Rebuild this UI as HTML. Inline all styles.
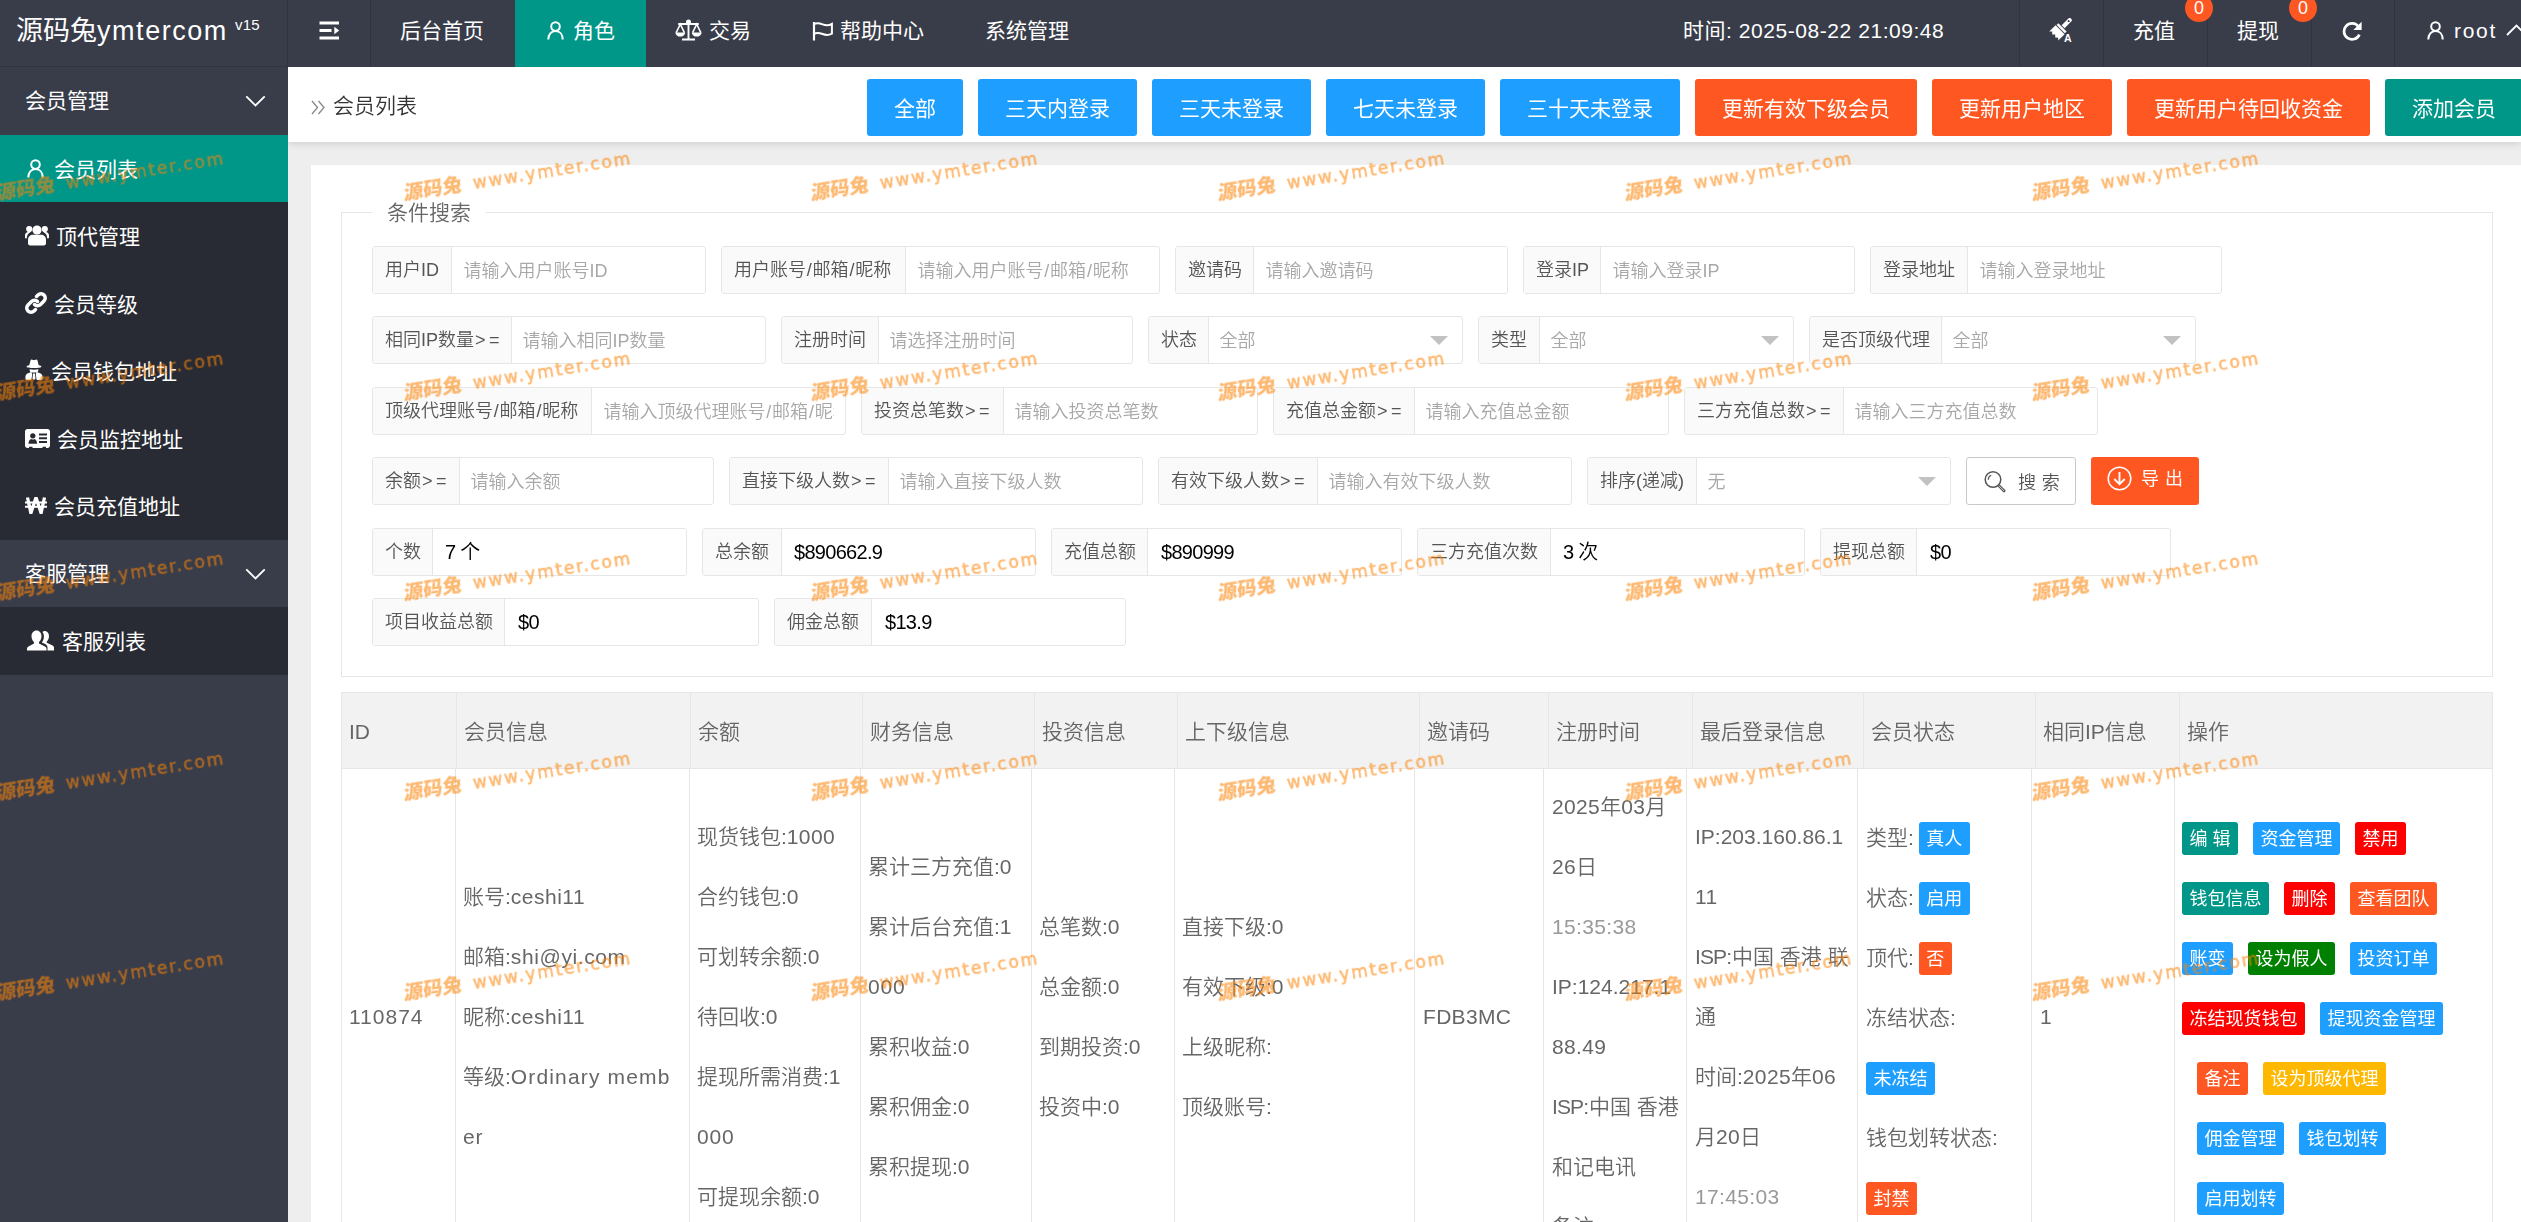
<!DOCTYPE html>
<html lang="zh-CN">
<head>
<meta charset="utf-8">
<title>会员列表</title>
<style>
*{box-sizing:border-box;margin:0;padding:0}
html,body{width:2521px;height:1222px;overflow:hidden;background:#eee}
body{font-family:"Liberation Sans","Noto Sans CJK SC",sans-serif;font-size:21px;color:#333;position:relative;line-height:1}
svg{display:block}
.abs{position:absolute}
/* ---------- header ---------- */
#hdr{position:absolute;left:0;top:0;width:2521px;height:67px;background:#393D49;color:#fff;z-index:5}
#hdr .sep{position:absolute;top:0;width:1px;height:67px;background:#30343f}
#hdr .t{position:absolute;top:0;height:66px;line-height:62px;white-space:nowrap;font-size:21px}
#logo{left:16px;font-size:27px !important;line-height:62px !important}
#logo b{font-weight:normal;letter-spacing:1.55px}
#logo sup{font-size:15px;position:relative;top:-10.5px;left:7px;vertical-align:baseline;letter-spacing:.3px}
#act{position:absolute;left:515px;top:0;width:131px;height:67px;background:#009688}
.badge{position:absolute;top:-6px;width:28px;height:28px;border-radius:14px;background:#FF5722;color:#fff;font-size:18px;line-height:29px;text-align:center}
/* ---------- sidebar ---------- */
#side{position:absolute;left:0;top:65.75px;width:288px;height:1156px;background:#393D49;color:#fff;z-index:4}
#side .it{position:absolute;left:0;width:288px;height:67.5px;line-height:68.5px;font-size:21px;white-space:nowrap}
#side .ch{background:#282B33;line-height:69px !important}
#side .on{background:#009688}
#side .it span{position:absolute;top:0}
#side .it svg{position:absolute}
/* ---------- crumb ---------- */
#crumb{will-change:transform;position:absolute;left:288px;top:67px;width:2233px;height:75px;background:#fff;box-shadow:0 2px 7px rgba(0,0,0,.13);z-index:3}
#crumb .bt{position:absolute;top:12px;height:57px;line-height:60px;border-radius:3px;color:#fff;font-size:21px;text-align:center;white-space:nowrap}
.blue{background:#1E9FFF}.org{background:#FF5722}.grn{background:#009688}.red{background:#FF0000}.dg{background:#008000}.yel{background:#FFB800}
#card{position:absolute;left:311px;top:165px;width:2300px;height:1100px;background:#fff;z-index:1}
#lay{will-change:transform;font-weight:350;position:absolute;left:0;top:0;width:2521px;height:1222px;z-index:2;overflow:hidden}
#fs{position:absolute;left:341px;top:212px;width:2152px;height:465px;border:1px solid #e6e6e6}
#lg{position:absolute;left:372px;top:196px;width:114px;height:34px;background:#fff;line-height:34px;text-align:center;font-size:21px;color:#666}
.fi{position:absolute;height:48px;border:1px solid #e6e6e6;border-radius:3px;background:#fff;font-size:18px;line-height:47.5px;white-space:nowrap;overflow:hidden}
.fi label{position:absolute;left:0;top:0;height:46px;background:#FAFAFA;border-right:1px solid #e6e6e6;padding-left:12px;color:#555}
.fi i,.fi u{font-style:normal;text-decoration:none;position:absolute;top:1px;height:45px;margin-left:-1.500px;right:11px;overflow:hidden;color:#a8a8a8}
.fi u{color:#000;font-size:20px;letter-spacing:-.7px;top:0;margin-left:0}
.fi s{position:absolute;right:14px;top:19px;width:0;height:0;border:9px solid transparent;border-top-color:#c2c2c2;border-bottom-width:0}
.sbtn,.ebtn{position:absolute;height:48px;border-radius:3px;font-size:18px;line-height:48px;white-space:nowrap}
.sbtn{border:1px solid #c9c9c9;background:#fff;color:#555}
.ebtn{background:#FF5722;color:#fff;font-weight:400}
#th{position:absolute;left:341px;top:692px;width:2152px;height:77px;background:#f2f2f2;border:1px solid #e6e6e6}
#tbl{position:absolute;left:341px;top:768px;width:2152px;height:500px;border:1px solid #e6e6e6;border-top:0}
.hb{position:absolute;top:693px;width:1px;height:75px;background:#e6e6e6}
.bb{position:absolute;top:769px;width:1px;height:460px;background:#e6e6e6}
.hc{position:absolute;top:702px;height:60px;line-height:60px;font-size:21px;color:#666;white-space:nowrap}
.bc{position:absolute;line-height:60px;font-size:21px;color:#666;white-space:nowrap}
.bc em{font-style:normal;color:#999}
.xs{display:inline-block;vertical-align:middle;height:33px;line-height:35px;padding:0 7.5px;font-size:18px;font-weight:normal;color:#fff;border-radius:3px;position:relative;top:-1px}
.ml{margin-left:15px}
#wm{position:absolute;left:0;top:0;width:2521px;height:1222px;z-index:9;overflow:hidden;pointer-events:none}
.wm{position:absolute;white-space:nowrap;line-height:24px;height:24px;transform-origin:0 100%;transform:rotate(-9deg);color:rgb(252,132,8);font-family:"DejaVu Sans","Noto Sans CJK SC",sans-serif;font-weight:normal;font-size:17px;letter-spacing:1.87px;-webkit-text-stroke:.55px rgb(252,132,8);opacity:.57}
.wm b{display:inline-block;font-size:19.6px;font-family:"Liberation Sans","Noto Sans CJK SC",sans-serif;font-weight:900;letter-spacing:0;-webkit-text-stroke:0;transform:skewX(-10deg);margin-right:12px;vertical-align:top;position:relative;top:-1.5px;left:1px}
q{quotes:none;letter-spacing:3.500px;margin-left:1px}q:before,q:after{content:none}
.sl{letter-spacing:0;margin:0 .8px}
</style>
</head>
<body>

<!-- ================= HEADER ================= -->
<div id="hdr">
  <div class="t" id="logo">源码兔<b>ymtercom</b><sup>v15</sup></div>
  <div class="sep" style="left:287px"></div><div class="abs" style="left:0;top:66px;width:288px;height:1px;background:#30343f"></div>
  <div class="sep" style="left:370px"></div>
  <svg class="abs" style="left:319px;top:21px" width="21" height="19" viewBox="0 0 21 19"><path d="M.5 2h19.500M.5 9.500h12M.5 17h19.500" stroke="#fff" stroke-width="2.900" fill="none"/><path d="M15.300 5.800l4.900 3.700-4.900 3.700z" fill="#fff"/></svg>
  <div class="t" style="left:400px">后台首页</div>
  <div id="act"></div>
  <svg class="abs" style="left:547px;top:21px" width="17" height="19" viewBox="0 0 17 19"><circle cx="8.5" cy="5.6" r="4.3" stroke="#fff" stroke-width="2" fill="none"/><path d="M1.3 18.5c0-5.2 3-8.4 7.2-8.4s7.2 3.2 7.2 8.4" stroke="#fff" stroke-width="2" fill="none"/></svg>
  <div class="t" style="left:573px">角色</div>
  <svg class="abs" style="left:675px;top:19px" width="27" height="22" viewBox="0 0 27 22"><g stroke="#fff" stroke-width="1.900" fill="none"><path d="M13.500 3v16.500M7 20.500h13M3.200 5h20.600"/><path d="M1.200 13.600l4.100-8.400 4.100 8.400M17.600 13.600l4.100-8.400 4.100 8.400" stroke-width="1.600"/></g><g fill="#fff"><circle cx="13.500" cy="2.900" r="2.500"/><path d="M.3 13.400h10c-.4 2.600-2.300 4.200-5 4.200s-4.600-1.600-5-4.200zM16.700 13.400h10c-.4 2.600-2.300 4.200-5 4.200s-4.600-1.600-5-4.200z"/></g></svg>
  <div class="t" style="left:709px">交易</div>
  <svg class="abs" style="left:812px;top:21px" width="22" height="20" viewBox="0 0 22 20"><path d="M2 1v18.5" stroke="#fff" stroke-width="2.2" fill="none"/><path d="M2 3.2c3-1.6 5.6-1 8.6.2s5.800 1.500 9.300 -.4v9.600c-3.500 1.900 -6.300 1.600 -9.300 .4s-5.600 -1.800 -8.600 -.2" stroke="#fff" stroke-width="2" fill="none"/></svg>
  <div class="t" style="left:840px">帮助中心</div>
  <div class="t" style="left:985px">系统管理</div>
  <div class="t" style="left:1683px;letter-spacing:.55px">时间: 2025-08-22 21:09:48</div>
  <div class="sep" style="left:2019px"></div>
  <div class="sep" style="left:2103px"></div>
  <div class="sep" style="left:2207px"></div>
  <div class="sep" style="left:2311px"></div>
  <div class="sep" style="left:2394px"></div>
  <svg class="abs" style="left:2048px;top:18px" width="25" height="25" viewBox="0 0 25 25"><g transform="translate(11.400,12.400) rotate(45) scale(1.1)" fill="#fff"><path d="M-1.900 -13.200a1.900 1.900 0 0 1 3.800 0v8.400h-3.800zM0 -12.800a.9 .9 0 1 0 .01 0z" fill-rule="evenodd"/><path d="M-5.300 -4h10.600v2.300h-10.600z"/><path d="M-5.800 -.9h11.600v8.200l-1.900-1.900-1.950 1.900-1.950-1.900-1.950 1.900-1.950-1.900-1.900 1.900z"/></g><text x="16" y="23.500" font-size="10.500" font-weight="bold" fill="#fff" font-family="Liberation Sans,sans-serif">A</text></svg>
  <div class="t" style="left:2133px">充值</div>
  <div class="badge" style="left:2185px">0</div>
  <div class="t" style="left:2237px">提现</div>
  <div class="badge" style="left:2289px">0</div>
  <svg class="abs" style="left:2342px;top:21px" width="21" height="20" viewBox="0 0 21 20"><path d="M17.4 13.6a8 8 0 1 1 -1.200 -8.300" stroke="#fff" stroke-width="2.7" fill="none"/><path d="M19.600 .8v8.200h-8.200z" fill="#fff"/></svg>
  <svg class="abs" style="left:2427px;top:21px" width="17" height="19" viewBox="0 0 17 19"><circle cx="8.5" cy="5.6" r="4.3" stroke="#fff" stroke-width="2" fill="none"/><path d="M1.3 18.5c0-5.2 3-8.4 7.2-8.4s7.2 3.2 7.2 8.400" stroke="#fff" stroke-width="2" fill="none"/></svg>
  <div class="t" style="left:2454px;letter-spacing:1.7px">root</div>
  <svg class="abs" style="left:2506px;top:24px" width="20" height="12" viewBox="0 0 20 12"><path d="M1 11l9.5-9.500 9.500 9.500" stroke="#fff" stroke-width="1.800" fill="none"/></svg>
</div>

<!-- ================= SIDEBAR ================= -->
<div id="side">
  <div class="it" style="top:1.5px"><span style="left:25px">会员管理</span><svg style="left:245px;top:28px" width="21" height="12" viewBox="0 0 21 12"><path d="M1.300 1.300l9.200 9.200 9.200 -9.200" stroke="#fff" stroke-width="1.900" fill="none"/></svg></div>
  <div class="it ch on" style="top:69px"><svg style="left:27px;top:24px" width="17" height="19" viewBox="0 0 17 19"><circle cx="8.5" cy="5.6" r="4.3" stroke="#fff" stroke-width="2" fill="none"/><path d="M1.3 18.5c0-5.2 3-8.4 7.2-8.4s7.2 3.2 7.2 8.400" stroke="#fff" stroke-width="2" fill="none"/></svg><span style="left:54px">会员列表</span></div>
  <div class="it ch" style="top:136.5px"><svg style="left:25px;top:22px" width="24" height="22" viewBox="0 0 24 22"><g fill="#fff"><circle cx="12" cy="6" r="4.6"/><circle cx="4.2" cy="5" r="3.1"/><circle cx="19.800" cy="5" r="3.1"/><path d="M5.200 21.500c-1.300 0-2.200-.9-2.200-2.200v-3.600c0-3 2.200-5 5-5h8c2.800 0 5 2 5 5v3.600c0 1.300-.9 2.200-2.200 2.200z"/><path d="M0 13.500v-2.300c0-1.900 1.500-3.200 3.300-3.200h2.300c-2.500 1.500-3.700 3.300-3.900 6.600c-1 0-1.700-.4-1.700-1.100zM24 13.500v-2.300c0-1.900-1.500-3.200-3.300-3.200h-2.300c2.500 1.500 3.700 3.300 3.900 6.600c1 0 1.700-.4 1.700-1.100z"/></g></svg><span style="left:56px">顶代管理</span></div>
  <div class="it ch" style="top:204px"><svg style="left:25px;top:22px" width="22" height="22" viewBox="0 0 22 22"><g stroke="#fff" stroke-width="3.500" fill="none" stroke-linecap="round"><path d="M9.500 12.500a4.200 4.200 0 0 0 6 0l3.500-3.500a4.200 4.200 0 0 0-6-6l-1.500 1.500"/><path d="M12.500 9.500a4.200 4.200 0 0 0-6 0l-3.500 3.500a4.200 4.200 0 0 0 6 6l1.500-1.500"/></g></svg><span style="left:54px">会员等级</span></div>
  <div class="it ch" style="top:271.5px"><svg style="left:25px;top:22px" width="18" height="21" viewBox="0 0 18 21"><g fill="#fff"><path d="M4.300 6.200l1.200-4.600c.2-.8 1-1.200 1.700-.9l1 .4c.5.2 1.100.2 1.600 0l1-.4c.7-.3 1.500.1 1.700.9l1.200 4.600c1.700.3 2.800.8 2.800 1.300c0 .9-3.400 1.600-7.500 1.600s-7.500-.7-7.500-1.600c0-.5 1.100-1 2.800-1.300z"/><path d="M4.600 10.300c1.300.3 2.800.4 4.400.4s3.100-.1 4.400-.4c.1 1-.3 2.100-1 2.900l2.600 1c1.600.6 2.600 2.100 2.600 3.800v1.600c0 .8-.6 1.400-1.400 1.400h-4.500l-1-5.700.9-1.800h-5.200l.9 1.800-1 5.700h-4.500c-.8 0-1.400-.6-1.400-1.400v-1.600c0-1.700 1-3.200 2.600-3.800l2.600-1c-.7-.8-1.100-1.900-1-2.900z"/><path d="M8.300 14.200h1.400l.9 5.300-1.600 1.500-1.600-1.500z"/></g></svg><span style="left:51px">会员钱包地址</span></div>
  <div class="it ch" style="top:339px"><svg style="left:25px;top:24px" width="25" height="19" viewBox="0 0 25 19"><path d="M2.500 0h20c1.400 0 2.500 1.100 2.500 2.500v14c0 1.400-1.100 2.500-2.500 2.500h-1.500v-1.300h-3.500v1.300h-10v-1.300h-3.500v1.300h-1.500c-1.400 0-2.500-1.100-2.500-2.500v-14c0-1.400 1.100-2.500 2.500-2.500zM7.800 4.200a2.700 2.700 0 1 0 .01 0zM3.500 14.800h8.600c0-3-1.300-4.600-2.700-4.900c-.4 .4-1 .6-1.600 .6s-1.200-.2-1.600-.6c-1.400 .3-2.700 1.900-2.700 4.900zM14 4.500v2h8v-2zM14 8.300v2h8v-2zM14 12.100v2h8v-2z" fill="#fff" fill-rule="evenodd"/></svg><span style="left:57px">会员监控地址</span></div>
  <div class="it ch" style="top:406.5px"><svg style="left:25px;top:25px" width="22" height="17" viewBox="0 0 22 17"><g stroke="#fff" fill="none"><path d="M2.500 .5l3.400 15.500 5.100 -15.500 5.100 15.500 3.400 -15.500" stroke-width="3.300" stroke-linejoin="miter"/><path d="M0 5.500h22M0 9.700h22" stroke-width="2"/></g></svg><span style="left:54px">会员充值地址</span></div>
  <div class="it" style="top:474px"><span style="left:25px">客服管理</span><svg style="left:245px;top:28px" width="21" height="12" viewBox="0 0 21 12"><path d="M1.300 1.300l9.200 9.200 9.200 -9.200" stroke="#fff" stroke-width="1.900" fill="none"/></svg></div>
  <div class="it ch" style="top:541.5px"><svg style="left:27px;top:23px" width="27" height="21" viewBox="0 0 27 21"><g fill="#fff"><path d="M17.500 1c2.700 0 4.500 2.200 4.500 5.200c0 2.200-.9 4.200-2.200 5.300v1.300l5.800 2.800c.9 .5 1.400 1.300 1.400 2.300v2.600h-6.500v-2.600c0-1.700-.8-3-2.300-3.800l-3.400-1.700c1.300-1.500 2.100-3.600 2.100-5.700c0-1.900-.5-3.500-1.400-4.700c.6-.6 1.300-1 2-1z"/><path d="M9.500 .5c3 0 5 2.500 5 5.800c0 2.400-1 4.600-2.500 5.800v1.400l6 3c1 .5 1.500 1.400 1.500 2.400v1.600h-19.500v-1.600c0-1 .5-1.900 1.500-2.400l5.500-3v-1.400c-1.500-1.200-2.500-3.400-2.500-5.800c0-3.300 2-5.800 5-5.800z"/></g></svg><span style="left:62px">客服列表</span></div>
</div>

<!-- ================= BREADCRUMB BAR ================= -->
<div id="crumb">
  <svg class="abs" style="left:23px;top:33px" width="14" height="15" viewBox="0 0 14 15"><path d="M1 1l5.500 6.500-5.500 6.500M7.500 1l5.500 6.500-5.500 6.500" stroke="#888" stroke-width="1.300" fill="none"/></svg>
  <div class="abs" style="left:45px;top:0;line-height:78px;font-size:21px;font-weight:350;color:#333;white-space:nowrap">会员列表</div>
  <div class="bt blue" style="left:579px;width:96px">全部</div>
  <div class="bt blue" style="left:690px;width:159px">三天内登录</div>
  <div class="bt blue" style="left:864px;width:159px">三天未登录</div>
  <div class="bt blue" style="left:1038px;width:159px">七天未登录</div>
  <div class="bt blue" style="left:1212px;width:180px">三十天未登录</div>
  <div class="bt org" style="left:1407px;width:222px">更新有效下级会员</div>
  <div class="bt org" style="left:1644px;width:180px">更新用户地区</div>
  <div class="bt org" style="left:1839px;width:243px">更新用户待回收资金</div>
  <div class="bt grn" style="left:2097px;width:138px">添加会员</div>
</div>

<div id="card">
<!--CARD-->
</div>

<div id="lay">
  <div id="fs"></div>
  <div id="lg">条件搜索</div>

  <!-- row 1 -->
  <div class="fi" style="left:372px;top:246px;width:334px"><label style="width:79px">用户ID</label><i style="left:92px">请输入用户账号ID</i></div>
  <div class="fi" style="left:721px;top:246px;width:439px"><label style="width:184px">用户账号<q class="sl">/</q>邮箱<q class="sl">/</q>昵称</label><i style="left:197px">请输入用户账号<q class="sl">/</q>邮箱<q class="sl">/</q>昵称</i></div>
  <div class="fi" style="left:1175px;top:246px;width:333px"><label style="width:78px">邀请码</label><i style="left:91px">请输入邀请码</i></div>
  <div class="fi" style="left:1523px;top:246px;width:332px"><label style="width:77px">登录IP</label><i style="left:90px">请输入登录IP</i></div>
  <div class="fi" style="left:1870px;top:246px;width:352px"><label style="width:97px">登录地址</label><i style="left:110px">请输入登录地址</i></div>
  <!-- row 2 -->
  <div class="fi" style="left:372px;top:316px;width:394px"><label style="width:139px">相同IP数量<q>&gt;=</q></label><i style="left:151px">请输入相同IP数量</i></div>
  <div class="fi" style="left:781px;top:316px;width:352px"><label style="width:97px">注册时间</label><i style="left:109px">请选择注册时间</i></div>
  <div class="fi" style="left:1148px;top:316px;width:315px"><label style="width:60px">状态</label><i style="left:72px">全部</i><s></s></div>
  <div class="fi" style="left:1478px;top:316px;width:316px"><label style="width:61px">类型</label><i style="left:73px">全部</i><s></s></div>
  <div class="fi" style="left:1809px;top:316px;width:387px"><label style="width:132px">是否顶级代理</label><i style="left:144px">全部</i><s></s></div>
  <!-- row 3 -->
  <div class="fi" style="left:372px;top:387px;width:474px"><label style="width:219px">顶级代理账号<q class="sl">/</q>邮箱<q class="sl">/</q>昵称</label><i style="left:232px">请输入顶级代理账号<q class="sl">/</q>邮箱<q class="sl">/</q>昵称</i></div>
  <div class="fi" style="left:861px;top:387px;width:397px"><label style="width:142px">投资总笔数<q>&gt;=</q></label><i style="left:154px">请输入投资总笔数</i></div>
  <div class="fi" style="left:1273px;top:387px;width:396px"><label style="width:141px">充值总金额<q>&gt;=</q></label><i style="left:153px">请输入充值总金额</i></div>
  <div class="fi" style="left:1684px;top:387px;width:414px"><label style="width:159px">三方充值总数<q>&gt;=</q></label><i style="left:171px">请输入三方充值总数</i></div>
  <!-- row 4 -->
  <div class="fi" style="left:372px;top:457px;width:342px"><label style="width:87px">余额<q>&gt;=</q></label><i style="left:99px">请输入余额</i></div>
  <div class="fi" style="left:729px;top:457px;width:414px"><label style="width:159px">直接下级人数<q>&gt;=</q></label><i style="left:171px">请输入直接下级人数</i></div>
  <div class="fi" style="left:1158px;top:457px;width:414px"><label style="width:159px">有效下级人数<q>&gt;=</q></label><i style="left:171px">请输入有效下级人数</i></div>
  <div class="fi" style="left:1587px;top:457px;width:364px"><label style="width:109px">排序(递减)</label><i style="left:121px">无</i><s></s></div>
  <div class="sbtn" style="left:1966px;top:457px;width:110px"><svg width="30" height="30" viewBox="0 0 30 30" style="position:absolute;left:9px;top:8px"><circle cx="17" cy="13.500" r="7.800" stroke="#555" stroke-width="1.500" fill="none"/><path d="M12.300 13.800a4.800 4.800 0 0 1 2.900 -4.600" stroke="#555" stroke-width="1.200" fill="none"/><path d="M23 19.800l5 5" stroke="#555" stroke-width="3" stroke-linecap="round" fill="none"/><path d="M23.300 20.100l4.500 4.500" stroke="#fff" stroke-width=".8" stroke-linecap="round" fill="none"/></svg><span style="position:absolute;left:51px;top:1px;letter-spacing:.4px">搜 索</span></div>
  <div class="ebtn" style="left:2091px;top:457px;width:108px"><svg width="25" height="25" viewBox="0 0 25 25" style="position:absolute;left:16px;top:9px"><circle cx="12.500" cy="12.500" r="11.300" stroke="#fff" stroke-width="1.500" fill="none"/><path d="M12.500 6v12M7.300 13l5.200 5.200 5.200 -5.200" stroke="#fff" stroke-width="1.900" fill="none"/></svg><span style="position:absolute;left:50px;top:-2px;letter-spacing:.5px">导 出</span></div>
  <!-- row 5 -->
  <div class="fi" style="left:372px;top:528px;width:315px"><label style="width:60px">个数</label><u style="left:72px">7 个</u></div>
  <div class="fi" style="left:702px;top:528px;width:334px"><label style="width:79px">总余额</label><u style="left:91px">$890662.9</u></div>
  <div class="fi" style="left:1051px;top:528px;width:351px"><label style="width:96px">充值总额</label><u style="left:109px">$890999</u></div>
  <div class="fi" style="left:1417px;top:528px;width:388px"><label style="width:133px">三方充值次数</label><u style="left:145px">3 次</u></div>
  <div class="fi" style="left:1820px;top:528px;width:351px"><label style="width:96px">提现总额</label><u style="left:109px">$0</u></div>
  <!-- row 6 -->
  <div class="fi" style="left:372px;top:598px;width:387px"><label style="width:132px">项目收益总额</label><u style="left:145px">$0</u></div>
  <div class="fi" style="left:774px;top:598px;width:352px"><label style="width:97px">佣金总额</label><u style="left:110px">$13.9</u></div>
  <div id="th"></div>
  <div id="tbl"></div>
  <!-- header cells -->
  <div class="hb" style="left:456px"></div><div class="hb" style="left:690px"></div><div class="hb" style="left:862px"></div><div class="hb" style="left:1034px"></div><div class="hb" style="left:1177px"></div><div class="hb" style="left:1419px"></div><div class="hb" style="left:1548px"></div><div class="hb" style="left:1692px"></div><div class="hb" style="left:1863px"></div><div class="hb" style="left:2035px"></div><div class="hb" style="left:2179px"></div>
  <div class="hc" style="left:349px">ID</div>
  <div class="hc" style="left:464px">会员信息</div>
  <div class="hc" style="left:698px">余额</div>
  <div class="hc" style="left:870px">财务信息</div>
  <div class="hc" style="left:1042px">投资信息</div>
  <div class="hc" style="left:1185px">上下级信息</div>
  <div class="hc" style="left:1427px">邀请码</div>
  <div class="hc" style="left:1556px">注册时间</div>
  <div class="hc" style="left:1700px">最后登录信息</div>
  <div class="hc" style="left:1871px">会员状态</div>
  <div class="hc" style="left:2043px">相同IP信息</div>
  <div class="hc" style="left:2187px">操作</div>
  <!-- body borders -->
  <div class="bb" style="left:455px"></div><div class="bb" style="left:689px"></div><div class="bb" style="left:860px"></div><div class="bb" style="left:1031px"></div><div class="bb" style="left:1174px"></div><div class="bb" style="left:1414px"></div><div class="bb" style="left:1543px"></div><div class="bb" style="left:1686px"></div><div class="bb" style="left:1857px"></div><div class="bb" style="left:2031px"></div><div class="bb" style="left:2174px"></div>
  <!-- body cells -->
  <div class="bc" style="left:349px;top:987px"><span style="letter-spacing:1.0px">110874</span></div>
  <div class="bc" style="left:463px;top:867px">账号:<span style="letter-spacing:0.5px">ceshi11</span><br>邮箱:<span style="letter-spacing:0.6px">shi@yi.com</span><br>昵称:<span style="letter-spacing:0.5px">ceshi11</span><br>等级:<span style="letter-spacing:1.15px">Ordinary memb</span><br><span style="letter-spacing:0.8px">er</span></div>
  <div class="bc" style="left:697px;top:807px">现货钱包:<span style="letter-spacing:0.35px">1000</span><br>合约钱包:<span style="letter-spacing:0.35px">0</span><br>可划转余额:<span style="letter-spacing:0.35px">0</span><br>待回收:<span style="letter-spacing:0.35px">0</span><br>提现所需消费:<span style="letter-spacing:0.35px">1</span><br><span style="letter-spacing:0.8px">000</span><br>可提现余额:<span style="letter-spacing:0.35px">0</span><br>&nbsp;</div>
  <div class="bc" style="left:868px;top:837px">累计三方充值:<span style="letter-spacing:0.35px">0</span><br>累计后台充值:<span style="letter-spacing:0.35px">1</span><br><span style="letter-spacing:0.8px">000</span><br>累积收益:<span style="letter-spacing:0.35px">0</span><br>累积佣金:<span style="letter-spacing:0.35px">0</span><br>累积提现:<span style="letter-spacing:0.35px">0</span></div>
  <div class="bc" style="left:1039px;top:897px">总笔数:<span style="letter-spacing:0.35px">0</span><br>总金额:<span style="letter-spacing:0.35px">0</span><br>到期投资:<span style="letter-spacing:0.35px">0</span><br>投资中:<span style="letter-spacing:0.35px">0</span></div>
  <div class="bc" style="left:1182px;top:897px">直接下级:<span style="letter-spacing:0.35px">0</span><br>有效下级:<span style="letter-spacing:0.35px">0</span><br>上级昵称:<br>顶级账号:</div>
  <div class="bc" style="left:1423px;top:987px"><span style="letter-spacing:0.3px">FDB3MC</span></div>
  <div class="bc" style="left:1552px;top:777px"><span style="letter-spacing:0.35px">2025</span>年<span style="letter-spacing:0.35px">03</span>月<br><span style="letter-spacing:0.35px">26</span>日<br><em><span style="letter-spacing:0.35px">15:35:38</span></em><br><span style="letter-spacing:0">IP:124.217.1</span><br><span style="letter-spacing:0.35px">88.49</span><br><span style="letter-spacing:-0.9px">ISP</span>:中国 香港<br>和记电讯<br>备注:</div>
  <div class="bc" style="left:1695px;top:807px"><span style="letter-spacing:0">IP:203.160.86.1</span><br><span style="letter-spacing:0.35px">11</span><br><span style="letter-spacing:-0.9px">ISP</span>:中国 香港 联<br>通<br>时间:<span style="letter-spacing:0.35px">2025</span>年<span style="letter-spacing:0.35px">06</span><br>月<span style="letter-spacing:0.35px">20</span>日<br><em><span style="letter-spacing:0.35px">17:45:03</span></em></div>
  <div class="bc" style="left:1866px;top:808px;word-spacing:-1px">类型: <b class="xs blue">真人</b><br>状态: <b class="xs blue">启用</b><br>顶代: <b class="xs org">否</b><br>冻结状态:<br><b class="xs blue">未冻结</b><br>钱包划转状态:<br><b class="xs org">封禁</b></div>
  <div class="bc" style="left:2040px;top:987px"><span style="letter-spacing:0.35px">1</span></div>
  <div class="bc" style="left:2182px;top:808px"><b class="xs grn">编 辑</b><b class="xs blue ml">资金管理</b><b class="xs red ml">禁用</b><br><b class="xs grn">钱包信息</b><b class="xs red ml">删除</b><b class="xs org ml">查看团队</b><br><b class="xs blue">账变</b><b class="xs dg ml">设为假人</b><b class="xs blue ml">投资订单</b><br><b class="xs red">冻结现货钱包</b><b class="xs blue ml">提现资金管理</b><br><b class="xs org ml">备注</b><b class="xs yel ml">设为顶级代理</b><br><b class="xs blue ml">佣金管理</b><b class="xs blue ml">钱包划转</b><br><b class="xs blue ml">启用划转</b></div>

</div>

<div id="wm">
<div class="wm" style="left:-2px;top:181.5px"><b>源码兔</b>www.ymter.com</div>
<div class="wm" style="left:405px;top:181.5px"><b>源码兔</b>www.ymter.com</div>
<div class="wm" style="left:812px;top:181.5px"><b>源码兔</b>www.ymter.com</div>
<div class="wm" style="left:1219px;top:181.5px"><b>源码兔</b>www.ymter.com</div>
<div class="wm" style="left:1626px;top:181.5px"><b>源码兔</b>www.ymter.com</div>
<div class="wm" style="left:2033px;top:181.5px"><b>源码兔</b>www.ymter.com</div>
<div class="wm" style="left:-2px;top:381.5px"><b>源码兔</b>www.ymter.com</div>
<div class="wm" style="left:405px;top:381.5px"><b>源码兔</b>www.ymter.com</div>
<div class="wm" style="left:812px;top:381.5px"><b>源码兔</b>www.ymter.com</div>
<div class="wm" style="left:1219px;top:381.5px"><b>源码兔</b>www.ymter.com</div>
<div class="wm" style="left:1626px;top:381.5px"><b>源码兔</b>www.ymter.com</div>
<div class="wm" style="left:2033px;top:381.5px"><b>源码兔</b>www.ymter.com</div>
<div class="wm" style="left:-2px;top:581.5px"><b>源码兔</b>www.ymter.com</div>
<div class="wm" style="left:405px;top:581.5px"><b>源码兔</b>www.ymter.com</div>
<div class="wm" style="left:812px;top:581.5px"><b>源码兔</b>www.ymter.com</div>
<div class="wm" style="left:1219px;top:581.5px"><b>源码兔</b>www.ymter.com</div>
<div class="wm" style="left:1626px;top:581.5px"><b>源码兔</b>www.ymter.com</div>
<div class="wm" style="left:2033px;top:581.5px"><b>源码兔</b>www.ymter.com</div>
<div class="wm" style="left:-2px;top:781.5px"><b>源码兔</b>www.ymter.com</div>
<div class="wm" style="left:405px;top:781.5px"><b>源码兔</b>www.ymter.com</div>
<div class="wm" style="left:812px;top:781.5px"><b>源码兔</b>www.ymter.com</div>
<div class="wm" style="left:1219px;top:781.5px"><b>源码兔</b>www.ymter.com</div>
<div class="wm" style="left:1626px;top:781.5px"><b>源码兔</b>www.ymter.com</div>
<div class="wm" style="left:2033px;top:781.5px"><b>源码兔</b>www.ymter.com</div>
<div class="wm" style="left:-2px;top:981.5px"><b>源码兔</b>www.ymter.com</div>
<div class="wm" style="left:405px;top:981.5px"><b>源码兔</b>www.ymter.com</div>
<div class="wm" style="left:812px;top:981.5px"><b>源码兔</b>www.ymter.com</div>
<div class="wm" style="left:1219px;top:981.5px"><b>源码兔</b>www.ymter.com</div>
<div class="wm" style="left:1626px;top:981.5px"><b>源码兔</b>www.ymter.com</div>
<div class="wm" style="left:2033px;top:981.5px"><b>源码兔</b>www.ymter.com</div>
</div>

</body>
</html>
